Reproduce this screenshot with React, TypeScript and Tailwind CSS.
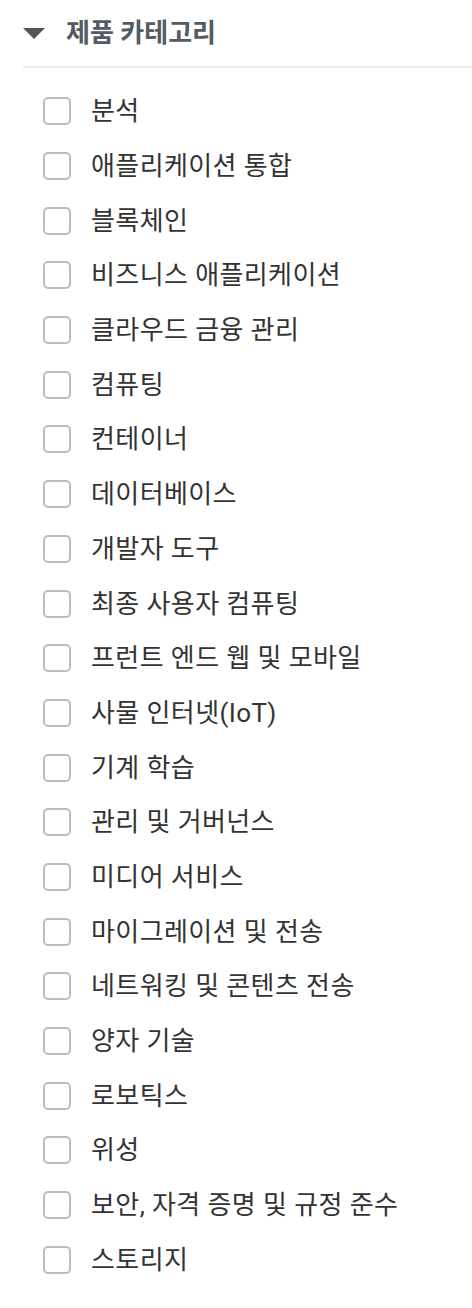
import React from 'react'

const CATEGORIES = [
  '분석',
  '애플리케이션 통합',
  '블록체인',
  '비즈니스 애플리케이션',
  '클라우드 금융 관리',
  '컴퓨팅',
  '컨테이너',
  '데이터베이스',
  '개발자 도구',
  '최종 사용자 컴퓨팅',
  '프런트 엔드 웹 및 모바일',
  '사물 인터넷(IoT)',
  '기계 학습',
  '관리 및 거버넌스',
  '미디어 서비스',
  '마이그레이션 및 전송',
  '네트워킹 및 콘텐츠 전송',
  '양자 기술',
  '로보틱스',
  '위성',
  '보안, 자격 증명 및 규정 준수',
  '스토리지',
]

export default function App() {
  return (
    <div
      className="w-[472px] h-[1308px] bg-white overflow-hidden"
      style={{ fontFamily: 'Roboto, "Noto Sans CJK KR", sans-serif' }}
    >
      {/* Section header */}
      <div className="flex items-center h-[66px] pl-[23px] gap-[21px]">
        <svg width="22" height="11" viewBox="0 0 22 11" className="mt-[1px]">
          <path d="M0 0 H22 L11 11 Z" fill="#50565d" />
        </svg>
        <h2 className="text-[26px] font-bold text-[#545b64] leading-none">제품 카테고리</h2>
      </div>
      <div className="ml-[23px] border-t-2 border-[#ebebeb]" />

      {/* Checkbox list */}
      <ul className="pt-[16px] pl-[43px]">
        {CATEGORIES.map((c) => (
          <li key={c} className="flex items-center h-[54.7px] gap-[20px]">
            <span className="w-[28px] h-[28px] rounded-[5px] border-2 border-[#b4c0c3] bg-white shrink-0" />
            <span className="text-[26px] tracking-[0.4px] text-[#333333] leading-none">{c}</span>
          </li>
        ))}
      </ul>
    </div>
  )
}
